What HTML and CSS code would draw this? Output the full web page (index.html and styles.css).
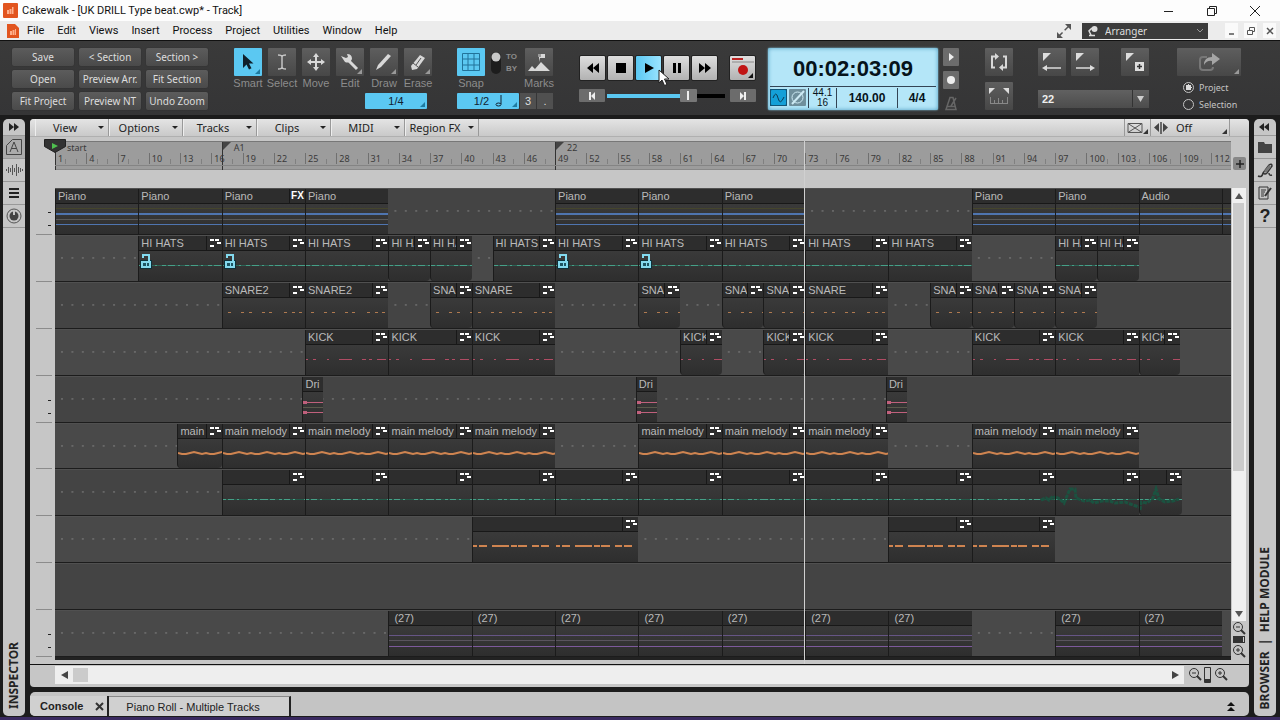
FILE: index.html
```
<!DOCTYPE html>
<html lang="en">
<head>
    <meta charset="UTF-8">
    <meta name="viewport" content="width=device-width, initial-scale=1.0">
    <title>Cakewalk - [UK DRILL Type beat.cwp* - Track]</title>
    <link rel="stylesheet" href="styles.css">
</head>
<body>
    <header class="titlebar">
        <svg class="logo" width="15" height="15"><rect width="15" height="15" rx="1" fill="#e2551f"/><path d="M4 7h2v4h-2zM6.500 6h2v5h-2zM9 4h1.500v7h-1.500z" fill="#ffb08c"/></svg>
        <h1>Cakewalk - [UK DRILL Type beat.cwp* - Track]</h1>
        <div class="winbuttons">
            <button aria-label="Minimize"><svg width="12" height="12"><path d="M1 6.500h9" stroke="#222"/></svg></button>
            <button aria-label="Restore"><svg width="12" height="12"><path d="M1.500 3.500h7v7h-7zM3.500 3v-1.500h7v7h-1.500" fill="none" stroke="#222"/></svg></button>
            <button aria-label="Close"><svg width="12" height="12"><path d="M1 1l10 10M11 1l-10 10" stroke="#222"/></svg></button>
        </div>
    </header>

    <nav class="menubar">
        <svg class="doc" width="12" height="14"><path d="M0 0h8l4 4v10h-12z" fill="#e2551f"/><path d="M3 7h2v4h-2zM5.500 6h2v5h-2zM8 5h1v6h-1z" fill="#ffb08c"/></svg>
        <button>File</button>
        <button>Edit</button>
        <button>Views</button>
        <button>Insert</button>
        <button>Process</button>
        <button>Project</button>
        <button>Utilities</button>
        <button>Window</button>
        <button>Help</button>
        <svg class="expand" width="16" height="16"><path d="M3 13L13 3" stroke="#555" stroke-width="1.500" stroke-dasharray="5 3 8"/><path d="M9 1h6v6zM1 9v6h6z" fill="#555"/></svg>
        <label class="workspace">
            <svg width="12" height="12"><path d="M5 3l-3 3 2 4M2 10.500h6" fill="none" stroke="#ddd" stroke-width="1.500"/><circle cx="7.500" cy="4" r="3" fill="#ddd"/></svg>
            <select aria-label="Workspace"><option>Arranger</option></select>
            <svg width="8" height="6"><path d="M1 1l3 3 3-3" fill="none" stroke="#999"/></svg>
        </label>
        <div class="childbuttons">
            <button aria-label="Minimize view"><svg width="10" height="10"><path d="M2 8h5" stroke="#555" stroke-width="1.500"/></svg></button>
            <button aria-label="Restore view"><svg width="10" height="10"><path d="M1.500 4.500h5v4h-5zM3.500 4v-2.500h5v4h-2" fill="none" stroke="#555"/></svg></button>
            <button aria-label="Close view"><svg width="10" height="10"><path d="M2 2l6 6M8 2l-6 6" stroke="#555" stroke-width="1.500"/></svg></button>
        </div>
    </nav>

    <section class="toolbar">
        <div class="custom">
            <button>Save</button>
            <button>&lt; Section</button>
            <button>Section &gt;</button>
            <button>Open</button>
            <button>Preview Arr.</button>
            <button>Fit Section</button>
            <button>Fit Project</button>
            <button>Preview NT</button>
            <button>Undo Zoom</button>
        </div>

        <div class="tools">
            <div class="toolrow">
                <div class="tool"><button class="icon on corner" id="smart"><svg width="20" height="20"><path d="M5 2v14l3.500-3.500 2.500 5 2.500-1.200-2.500-4.800h4.500z" fill="#10202c"/></svg></button><label for="smart">Smart</label></div>
                <div class="tool"><button class="icon" id="select"><svg width="20" height="20"><path d="M6 3q4 0 4 2q0-2 4-2M10 4v12M6 17q4 0 4-2q0 2 4 2" fill="none" stroke="#c4c4c4" stroke-width="1.500"/></svg></button><label for="select">Select</label></div>
                <div class="tool"><button class="icon" id="move"><svg width="20" height="20"><path d="M10 4v12M4 10h12" stroke="#d8d8d8" stroke-width="2"/><path d="M10 1l3 4h-6zM10 19l3-4h-6zM1 10l4-3v6zM19 10l-4-3v6z" fill="#d8d8d8"/></svg></button><label for="move">Move</label></div>
                <div class="tool"><button class="icon corner" id="edit"><svg width="20" height="20"><path d="M9 9l8 8" stroke="#d8d8d8" stroke-width="3"/><path d="M1 4l5 2 2-1-1-3q5 0 5 5-2 5-7 3z" fill="#d8d8d8"/></svg></button><label for="edit">Edit</label></div>
                <div class="tool"><button class="icon corner" id="draw"><svg width="20" height="20"><path d="M2 18l2-5 10-11 3 2-10 11z" fill="#d8d8d8"/></svg></button><label for="draw">Draw</label></div>
                <div class="tool"><button class="icon corner" id="erase"><svg width="20" height="20"><path d="M3 14l9-11 5 3-8 11-5 1z" fill="#d8d8d8"/><path d="M5 11l5 4M8 13l5-7" stroke="#555"/></svg></button><label for="erase">Erase</label></div>
            </div>
            <button class="res corner">1/4</button>
        </div>

        <div class="snap">
            <div class="toolrow">
                <div class="tool"><button class="icon on" id="snap"><svg width="20" height="20"><path d="M1.500 1.500h17v17h-17zM1.500 7h17M1.500 13h17M7 1.500v17M13 1.500v17" fill="none" stroke="#22739a"/></svg></button><label for="snap">Snap</label></div>
                <div class="toby"><svg width="12" height="24"><rect x="1" y="1" width="10" height="22" rx="5" fill="#1d1d1d"/><circle cx="6" cy="6" r="4.500" fill="#c9c9c9"/></svg><span>TO<br>BY</span></div>
                <div class="tool"><button class="icon" id="marks"><svg width="24" height="20"><path d="M1 19l4-5 3 3 6-7 9 9zM12 10V2h6v4h-5" fill="#d8d8d8"/><path d="M11 2h3v3h-3z" fill="#999"/></svg></button><label for="marks">Marks</label></div>
            </div>
            <div class="snaprow">
                <button class="res corner">1/2 <svg width="7" height="12"><path d="M6 0v9" stroke="#123"/><ellipse cx="3.500" cy="9.500" rx="2.500" ry="1.500" fill="none" stroke="#123"/></svg></button>
                <button>3</button>
                <button>.</button>
            </div>
        </div>

        <div class="transport">
            <div class="keys">
                <button aria-label="Rewind"><svg width="14" height="10"><path d="M7 0v10l-6-5zM13 0v10l-6-5z"/></svg></button>
                <button aria-label="Stop"><svg width="14" height="10"><path d="M2 0h10v10h-10z"/></svg></button>
                <button class="play" aria-label="Play"><svg width="14" height="10"><path d="M3 0l9 5-9 5z"/></svg>
                    <svg class="cursor" width="12" height="18"><path d="M1 1v13l3-3 2.500 5.500 2.500-1-2.500-5.500h4.500z" fill="#fff" stroke="#222"/></svg></button>
                <button aria-label="Pause"><svg width="14" height="10"><path d="M3 0h3v10h-3zM8 0h3v10h-3z"/></svg></button>
                <button aria-label="Fast forward"><svg width="14" height="10"><path d="M1 0v10l6-5zM7 0v10l6-5z"/></svg></button>
                <button class="record corner" aria-label="Record"><svg width="24" height="22"><path d="M1 3h11" stroke="#b22" stroke-width="2"/><path d="M1 6h22" stroke="#888"/><circle cx="12" cy="14" r="5" fill="#c11414"/></svg></button>
            </div>
            <div class="position">
                <button aria-label="Go to start"><svg width="10" height="8"><path d="M2 0h2v8h-2zM8 0v8l-4-4z" fill="#eee"/></svg></button>
                <input type="range" min="0" max="100" value="72" aria-label="Now time">
                <button aria-label="Go to end"><svg width="10" height="8"><path d="M6 0h2v8h-2zM2 0v8l4-4z" fill="#eee"/></svg></button>
            </div>
        </div>

        <div class="lcd">
            <div class="time">00:02:03:09</div>
            <div class="info">
                <svg class="wave" width="17" height="17"><rect width="17" height="17" rx="2" fill="#14a0d8" stroke="#115577" stroke-width="2"/><path d="M3 9q3-8 5 0t6-1" fill="none" stroke="#0c3c55"/></svg>
                <svg class="wave" width="17" height="17"><rect width="17" height="17" rx="1" fill="#6f8f9c"/><circle cx="8.500" cy="8.500" r="5.500" fill="none" stroke="#cdeaf4"/><path d="M3 15L15 2" stroke="#cdeaf4" stroke-width="2"/></svg>
                <span class="rate">44.1<br>16</span>
                <span class="tempo">140.00</span>
                <span class="meter">4/4</span>
            </div>
        </div>

        <div class="side">
            <button aria-label="Play on/off"><svg width="8" height="8"><path d="M2 0l5 4-5 4z" fill="#eee"/></svg></button>
            <button aria-label="Arm"><svg width="8" height="8"><circle cx="4" cy="4" r="4" fill="#eee"/></svg></button>
            <svg width="16" height="17"><path d="M3 15.500h10l-3-12h-3zM8 12l5-8M4 12.500h8" fill="none" stroke="#666" stroke-width="1.500"/></svg>
        </div>

        <div class="loop">
            <button class="icon" aria-label="Loop"><svg width="18" height="18"><path d="M6 3.500h-4v11h3M12 14.500h4v-11h-3" fill="none" stroke="#d8d8d8" stroke-width="2"/><path d="M5 0l4 3.500-4 3.500zM13 11l-4 3.500 4 3.500z" fill="#d8d8d8"/></svg></button>
            <button class="icon" aria-label="Punch"><svg width="20" height="18"><path d="M0 1h6l-6 6zM20 1h-6l6 6z" fill="#ddd"/><path d="M1 16.500h18M1.500 16v-6M5.500 16v-3M9.500 16v-5M13.500 16v-3M18.500 16v-6" fill="none" stroke="#888"/></svg></button>
        </div>

        <div class="markers">
            <div class="markrow">
                <button class="icon" aria-label="Previous marker"><svg width="20" height="20"><path d="M1 1h8l-8 8z" fill="#ddd"/><path d="M3 16h16" stroke="#ddd" stroke-width="1.500"/><path d="M0 16l5-3v6z" fill="#ddd"/></svg></button>
                <button class="icon" aria-label="Next marker"><svg width="20" height="20"><path d="M1 1h8l-8 8z" fill="#ddd"/><path d="M1 16h16" stroke="#ddd" stroke-width="1.500"/><path d="M20 16l-5-3v6z" fill="#ddd"/></svg></button>
                <button class="icon insert" aria-label="Insert marker"><svg width="20" height="20"><path d="M1 1h8l-8 8zM10 10h9v9h-9z" fill="#ddd"/><path d="M14.500 12v5M12 14.500h5" stroke="#333" stroke-width="1.500"/></svg></button>
            </div>
            <label class="section"><select aria-label="Marker"><option>22</option></select><svg width="17" height="17"><path d="M.5 0v17" stroke="#333"/><path d="M5 6h7l-3.500 6z" fill="#ccc"/></svg></label>
        </div>

        <div class="export">
            <button class="icon wide corner" aria-label="Export"><svg width="22" height="20"><path d="M9 5h-4q-3 0-3 3v7q0 3 3 3h7q3 0 3-3" fill="none" stroke="#777" stroke-width="2"/><path d="M6 13q0-8 8-8v-4l8 6-8 6v-4q-5-1-8 4z" fill="#a5a5a5"/></svg></button>
            <label><input type="radio" name="scope" checked>Project</label>
            <label><input type="radio" name="scope">Selection</label>
        </div>
    </section>

    <main>
        <aside class="strip left">
            <button aria-label="Expand inspector"><svg width="12" height="8"><path d="M1 0v8l5-4zM6 0v8l5-4z" fill="#222"/></svg></button>
            <button class="picked" aria-label="Arranger"><svg width="18" height="18"><path d="M1.500 16.500v-9l6-6h9v15z" fill="none" stroke="#444"/><path d="M5 14l4-10 4 10M6.500 10.500h5" fill="none" stroke="#444"/></svg></button>
            <button aria-label="Clip"><svg width="18" height="14"><path d="M1.500 6v2M3.500 4v6M5.500 5v4M7.500 2v10M9.500 5v4M11.500 1v12M13.500 4v6M15.500 5v4M17.500 6v2" stroke="#555"/></svg></button>
            <button aria-label="Track"><svg width="12" height="12"><path d="M1 2h10M1 6h10M1 10h10" stroke="#222" stroke-width="2"/></svg></button>
            <button aria-label="ProChannel"><svg width="16" height="16"><circle cx="8" cy="8" r="7" fill="none" stroke="#555"/><circle cx="8" cy="8" r="4.500" fill="#444"/><path d="M8 2v5" stroke="#c6c6c6" stroke-width="2"/></svg></button>
            <span>INSPECTOR</span>
        </aside>

        <div class="center">
            <section class="panel">
                <div class="viewmenu">
                    <button class="drop">View</button>
                    <button class="drop">Options</button>
                    <button class="drop">Tracks</button>
                    <button class="drop">Clips</button>
                    <button class="drop">MIDI</button>
                    <button class="drop">Region FX</button>
                    <button class="fade corner" aria-label="Crossfade"><svg width="16" height="12"><path d="M1 1.500v9h14v-9zM1 1.500l14 9M15 1.500l-14 9" fill="none" stroke="#555"/></svg></button>
                    <button class="nudge corner"><svg width="14" height="12"><path d="M7 0v12" stroke="#444" stroke-width="1.500"/><path d="M5 1v9l-5-4.500zM9 1v9l5-4.500z" fill="#444"/></svg>Off</button>
                </div>

                <div class="view">
                    <div class="gutter" id="gutter"></div>
                    <div class="timeline" id="timeline">
                        <div class="ruler" id="ruler"></div>
                        <div class="lanes" id="lanes"></div>
                    </div>
                    <div class="vscroll">
                        <button class="plus" aria-label="Add"><svg width="12" height="12"><path d="M6 2v8M2 6h8" stroke="#222" stroke-width="1.500"/></svg></button>
                        <div class="vtrack">
                            <button aria-label="Scroll up"><svg width="8" height="6"><path d="M0 6l4-6 4 6z" fill="#555"/></svg></button>
                            <div class="vthumb"></div>
                            <button aria-label="Scroll down"><svg width="8" height="6"><path d="M0 0l4 6 4-6z" fill="#555"/></svg></button>
                        </div>
                        <svg width="14" height="39"><g fill="none" stroke="#333"><circle cx="6" cy="6" r="4.500"/><path d="M9 9l4 4" stroke-width="2"/><path d="M4 6h4"/><circle cx="6" cy="29" r="4.500"/><path d="M9 32l4 4" stroke-width="2"/><path d="M4 29h4M6 27v4"/></g><path d="M1 15h12v7h-12z" fill="#333"/><path d="M11 16h1v5h-1z" fill="#ccc"/></svg>
                    </div>
                </div>

                <div class="hscroll">
                    <div class="htrack">
                        <button aria-label="Scroll left"><svg width="7" height="8"><path d="M7 0v8l-7-4z" fill="#444"/></svg></button>
                        <div class="hthumb"></div>
                        <button aria-label="Scroll right"><svg width="7" height="8"><path d="M0 0v8l7-4z" fill="#444"/></svg></button>
                    </div>
                    <svg width="42" height="18"><g fill="none" stroke="#333"><circle cx="6" cy="7" r="4.500"/><path d="M9 10l4 4" stroke-width="2"/><path d="M4 7h4"/><circle cx="32" cy="7" r="4.500"/><path d="M35 10l4 4" stroke-width="2"/><path d="M30 7h4M32 5v4"/><path d="M16.500 1.500h6v15h-6z"/></g><path d="M17 13h5v3h-5z" fill="#333"/></svg>
                </div>
            </section>

            <footer class="dock">
                <div class="tab current"><button>Console</button><button aria-label="Close Console"><svg width="9" height="9"><path d="M1 1l7 7M8 1l-7 7" stroke="#333" stroke-width="2"/></svg></button></div>
                <button class="tab">Piano Roll - Multiple Tracks</button>
                <button class="up" aria-label="Expand dock"><svg width="8" height="9"><path d="M0 4l4-4 4 4zM0 9l4-4 4 4z" fill="#111"/></svg></button>
            </footer>
        </div>

        <aside class="strip right">
            <button aria-label="Collapse browser"><svg width="12" height="8"><path d="M5 0v8l-5-4zM10 0v8l-5-4z" fill="#222"/></svg></button>
            <button aria-label="Media"><svg width="14" height="12"><path d="M0 1h6l1 2h7v9h-14z" fill="#444"/></svg></button>
            <button aria-label="Plugins"><svg width="16" height="16"><path d="M1 14q4 2 5-3l6-8q3-2 3 1l-5 7q-2 2-4 0M12 11q0 3 3 2" fill="none" stroke="#333" stroke-width="1.500"/><path d="M7 9l5-6 2 2-5 6z" fill="#777"/></svg></button>
            <button aria-label="Notes"><svg width="14" height="14"><path d="M1 1h9v12h-9z" fill="none" stroke="#333"/><path d="M3 4h5M3 6h4M3 8h3M3 10h3" stroke="#333"/><path d="M13 2l-6 8" stroke="#333" stroke-width="2"/></svg></button>
            <button class="help" aria-label="Help">?</button>
            <span>BROWSER&nbsp; |&nbsp; HELP MODULE</span>
        </aside>
    </main>

    <script src="script.js"></script>
</body>
</html>
```
FILE: styles.css
```
* {
    box-sizing: border-box;
}

body {
    margin: 0;
    height: 100vh;
    display: flex;
    flex-direction: column;
    overflow: hidden;
    background: #1c1c1c;
    border-bottom: 3px solid #3a2a60;
    font-family: "Liberation Sans", Arial, sans-serif;
    font-size: 11px;
}

button, select, input {
    margin: 0;
    padding: 0;
    border: 0;
    background: none;
    font: inherit;
    color: inherit;
}

button {
    display: flex;
    align-items: center;
    justify-content: center;
    white-space: nowrap;
}

svg {
    display: block;
    flex: none;
}

select {
    appearance: none;
}

/* small resize triangle in the lower right of a button */
.corner {
    position: relative;
}

.corner::after {
    content: "";
    position: absolute;
    right: 2px;
    bottom: 2px;
    border-left: 5px solid transparent;
    border-bottom: 5px solid #999;
}

/* title and menus */
.titlebar {
    height: 21px;
    display: flex;
    align-items: center;
    padding-left: 3px;
    background: #fdfdfd;
}

.titlebar h1 {
    margin: 0 0 0 4px;
    font: 11px Roboto, sans-serif;
    color: #111;
}

.winbuttons {
    display: flex;
    gap: 31px;
    margin-left: auto;
    padding-right: 19px;
}

.menubar {
    height: 20px;
    display: flex;
    align-items: center;
    background: #ececec;
    border-bottom: 1px solid #111;
    font: 11px Roboto, sans-serif;
    color: #111;
    padding-left: 7px;
}

.menubar > button {
    margin-right: 13px;
}

.doc {
    margin-right: 8px;
}

.expand {
    margin-left: auto;
    margin-right: 10px;
}

.workspace {
    width: 126px;
    height: 16px;
    display: flex;
    align-items: center;
    gap: 6px;
    padding: 0 4px 0 5px;
    background: #3c3c3c;
    color: #ddd;
    font: 10px "Noto Sans", sans-serif;
}

.workspace select {
    flex: 1;
}

.childbuttons {
    display: flex;
    gap: 6px;
    padding: 0 4px 0 17px;
}

.childbuttons button {
    width: 13px;
    height: 15px;
    background: #fafafa;
}

/* control bar */
.toolbar {
    height: 74px;
    display: flex;
    flex: none;
    padding: 7px 0 0 12px;
    background: linear-gradient(#3a3a3a, #353536);
    color: #ddd;
}

.custom {
    display: grid;
    grid-template-columns: repeat(3, 62px);
    grid-auto-rows: 18px;
    gap: 4px 5px;
    font: 10px "Noto Sans", sans-serif;
}

.custom button {
    background: linear-gradient(#5c5c5c, #4a4a4a);
    border-radius: 2px;
    box-shadow: 0 0 1px #222;
}

.tools {
    margin-left: 26px;
}

.toolrow {
    display: flex;
    gap: 6px;
}

.tool {
    width: 28px;
    display: flex;
    flex-direction: column;
    align-items: center;
    color: #8c8c8c;
}

.tool label {
    line-height: 14px;
}

.icon {
    width: 28px;
    height: 28px;
    background: linear-gradient(#5e5e5e, #474747);
    border-radius: 1px;
}

.on, .res {
    background: #5bc8f2;
    color: #123;
}

.on::after, .res::after {
    border-bottom-color: #1f7ba0;
}

.res {
    width: 62px;
    height: 16px;
    gap: 6px;
    border-radius: 1px;
}

.tools .res {
    margin: 3px 0 0 131px;
}

.snap {
    margin-left: 25px;
}

.snap .toolrow {
    gap: 5px;
}

.toby {
    width: 30px;
    display: flex;
    gap: 4px;
    padding-top: 3px;
    font-size: 8px;
    font-weight: bold;
    line-height: 12px;
    color: #8c8c8c;
}

.snaprow {
    display: flex;
    gap: 1px;
    margin-top: 3px;
}

.snaprow button {
    height: 16px;
    flex: 1;
    background: #505050;
}

.snaprow .res {
    flex: none;
    background: #5bc8f2;
}

.transport {
    margin-left: 26px;
    padding-top: 7px;
}

.keys {
    display: flex;
    gap: 1px;
}

.keys button {
    position: relative;
    width: 27px;
    height: 26px;
    background: linear-gradient(#dedede, #b2b2b2);
    border: 1px solid #222;
    border-radius: 2px;
    color: #111;
}

.keys .play {
    background: linear-gradient(90deg, #5bc8f2, #9be4ff);
}

.keys .record {
    margin-left: 10px;
    align-items: flex-start;
}

.keys .record::after {
    border-bottom-color: #111;
}

.cursor {
    position: absolute;
    left: 22px;
    top: 13px;
    z-index: 2;
}

.position {
    display: flex;
    gap: 2px;
    margin-top: 8px;
}

.position button {
    width: 26px;
    height: 13px;
    background: #6c6c6c;
    border-radius: 1px;
}

.position input {
    appearance: none;
    width: 118px;
    height: 13px;
    margin-right: 3px;
    background: linear-gradient(90deg, #5bc8f2 71%, #000 71%) center / 100% 4px no-repeat;
}

.position input::-webkit-slider-thumb {
    appearance: none;
    width: 17px;
    height: 13px;
    background: linear-gradient(90deg, transparent 7px, #eee 7px, #eee 9px, transparent 9px) center / 17px 9px no-repeat, #777;
    border-radius: 1px;
}

.lcd {
    width: 170px;
    height: 62px;
    margin-left: 12px;
    padding: 2px;
    display: flex;
    flex-direction: column;
    background: #b4e6f8;
    box-shadow: inset 0 0 4px #4d9cc0, 0 0 2px #8cd9f5;
    border-radius: 2px;
    color: #06131a;
    font-weight: bold;
}

.time {
    height: 37px;
    line-height: 37px;
    font-size: 22px;
    text-align: center;
    border-bottom: 1px solid #345;
}

.info {
    display: flex;
    align-items: center;
    height: 21px;
}

.wave {
    margin-right: 2px;
}

.info span {
    height: 20px;
    display: flex;
    align-items: center;
    justify-content: center;
    border-left: 1px solid #345;
}

.info .rate {
    width: 28px;
    font-size: 10px;
    line-height: 10px;
    font-weight: normal;
    text-align: center;
}

.tempo {
    flex: 1;
    font-size: 12px;
}

.meter {
    width: 39px;
    font-size: 12px;
}

.side {
    display: flex;
    flex-direction: column;
    gap: 5px;
    margin-left: 5px;
}

.side button {
    width: 16px;
    height: 18px;
    background: #6c6c6c;
    border-radius: 1px;
}

.loop {
    display: flex;
    flex-direction: column;
    gap: 6px;
    margin-left: 26px;
}

.markers {
    width: 111px;
    margin-left: 25px;
}

.markrow {
    display: flex;
    gap: 5px;
    margin-bottom: 14px;
}

.insert {
    margin-left: auto;
}

.section {
    height: 18px;
    display: flex;
    background: linear-gradient(#616161, #4c4c4c);
    font-weight: bold;
    color: #eee;
}

.section select {
    flex: 1;
    padding-left: 4px;
}

.export {
    margin-left: 28px;
    font: 9px "Noto Sans", sans-serif;
    color: #c4c4c4;
}

.wide {
    width: 64px;
    margin-bottom: 3px;
}

.export label {
    display: flex;
    align-items: center;
    gap: 5px;
    height: 17px;
    padding-left: 6px;
}

.export input {
    appearance: none;
    width: 11px;
    height: 11px;
    border: 1px solid #c4c4c4;
    border-radius: 50%;
}

.export input:checked {
    background: radial-gradient(circle, #ddd 3px, transparent 3px);
}

/* main area */
main {
    flex: 1;
    min-height: 0;
    display: flex;
    gap: 5px;
    padding: 4px 4px 1px 3px;
}

.strip {
    width: 22px;
    display: flex;
    flex-direction: column;
    background: #c6c6c6;
    border-radius: 5px;
    color: #222;
}

.strip button {
    height: 23px;
    flex: none;
    border-bottom: 1px solid #999;
}

.strip button:first-child {
    height: 17px;
}

.strip .picked {
    background: #ababab;
}

.strip .help {
    font-size: 18px;
    font-weight: bold;
}

.strip span {
    margin-top: auto;
    padding-top: 7px;
    writing-mode: vertical-rl;
    transform: rotate(180deg);
    font: bold 12px/22px "Noto Sans", sans-serif;
}

.center {
    flex: 1;
    min-width: 0;
    display: flex;
    flex-direction: column;
    gap: 5px;
}

.panel {
    flex: 1;
    min-height: 0;
    display: flex;
    flex-direction: column;
    background: #c6c6c6;
    border-radius: 4px;
    overflow: hidden;
}

.viewmenu {
    height: 18px;
    flex: none;
    display: flex;
    padding: 0 19px 0 5px;
    background: linear-gradient(#e4e4e4, #c9c9c9);
    border-bottom: 1px solid #b0b0b0;
    font: 11px "Noto Sans", sans-serif;
    color: #222;
}

.drop {
    position: relative;
    width: 74px;
    padding-right: 14px;
    border-left: 1px solid #eee;
    border-right: 1px solid #999;
}

.drop::after {
    content: "";
    position: absolute;
    right: 4px;
    top: 7px;
    border: 3px solid transparent;
    border-top-color: #222;
    border-bottom: 0;
}

.fade {
    width: 27px;
    margin-left: auto;
    border-left: 1px solid #999;
    border-right: 1px solid #999;
    padding-right: 5px;
}

.nudge {
    width: 79px;
    gap: 8px;
    justify-content: flex-start;
    padding-left: 3px;
    border-right: 1px solid #999;
}

.fade::after, .nudge::after {
    border-bottom-color: #333;
}

.view {
    flex: 1;
    min-height: 0;
    display: flex;
}

.gutter {
    width: 25px;
    padding: 51px 3px 7px 6px;
    display: grid;
    grid-auto-rows: 1fr;
}

.gutter div {
    border-bottom: 1px solid #8c8c8c;
}

.gutter svg {
    margin-left: auto;
}

.timeline {
    position: relative;
    flex: 1;
    min-width: 0;
    display: flex;
    flex-direction: column;
    padding-top: 4px;
}

.ruler {
    position: relative;
    height: 29px;
    flex: none;
    margin-bottom: 18px;
    background: #9c9c9c;
    border-top: 1px solid #777;
    border-bottom: 1px solid #888;
    display: grid;
    grid-template-columns: repeat(903, minmax(0, 1fr));
    grid-template-rows: 11px 16px;
    font: 9px "Noto Sans", sans-serif;
    color: #3a3a3a;
}

.ruler > span {
    height: 11px;
    line-height: 11px;
    border-left: 1px solid #707070;
    padding-left: 2px;
    grid-row: 2;
}

.ruler > i {
    grid-row: 2;
    height: 5px;
    margin-top: 6px;
    border-left: 1px solid #808080;
}

.ruler::after {
    content: "";
    grid-column: 1 / -1;
    grid-row: 2;
    height: 12px;
    border-bottom: 1px solid #848484;
}

.ruler > .marker {
    grid-row: 1 / 3;
    height: 28px;
    border-left: 1px solid #333;
    padding: 0;
    display: flex;
    gap: 3px;
}

.home {
    position: absolute;
    left: -11px;
    top: -3px;
}

.lanes {
    flex: 1;
    min-height: 0;
    display: grid;
    grid-template-rows: repeat(10, minmax(0, 1fr));
    border-bottom: 3px solid #222;
    margin-bottom: 4px;
}

.lane {
    display: grid;
    grid-template-columns: repeat(903, minmax(0, 1fr));
    grid-template-rows: 100%;
    background: #444;
    border-bottom: 1px solid #1c1c1c;
    border-top: 1px solid #505050;
    overflow: hidden;
}

.lane:nth-child(even) {
    background: #494949;
}

.dots {
    grid-row: 1;
    width: 100%;
    height: 100%;
}

.clip {
    grid-row: 1;
    min-width: 0;
    display: flex;
    flex-direction: column;
    border-left: 1px solid #1b1b1b;
    background: linear-gradient(#404040, #2e2e2e);
    overflow: hidden;
    color: #bababa;
}

.clip.short {
    border-radius: 0 0 4px 4px;
}

.clip header {
    height: 15px;
    flex: none;
    display: flex;
    background: #2d2d2d;
    border-bottom: 1px solid #181818;
    line-height: 14px;
}

.clip header span {
    flex: 1;
    min-width: 0;
    padding-left: 2px;
    white-space: nowrap;
    overflow: hidden;
}

.clip .wide-name {
    padding-left: 5px;
}

.clip header b {
    width: 16px;
    padding-left: 1px;
    border-left: 1px solid #181818;
    color: #fff;
    font-size: 10px;
}

.clip > svg {
    flex: 1;
    width: 100%;
    min-height: 0;
}

.playhead {
    position: absolute;
    top: 4px;
    bottom: 0;
    width: 1px;
    background: #d0d0d0;
}

.vscroll {
    width: 18px;
    display: flex;
    flex-direction: column;
    align-items: flex-start;
    padding: 20px 0 4px 1px;
}

.plus {
    width: 13px;
    height: 13px;
    margin: 0 0 18px 1px;
    background: #888;
    border-radius: 2px;
}

.vtrack {
    flex: 1;
    width: 14px;
    display: flex;
    flex-direction: column;
    background: #f0f0f0;
}

.vtrack button {
    height: 15px;
}

.vthumb {
    height: 62%;
    margin: 0 2px auto 1px;
    background: #cbcbcb;
}

.hscroll {
    height: 23px;
    flex: none;
    display: flex;
    gap: 4px;
    padding: 1px 19px 3px 25px;
    border-top: 1px solid #111;
}

.htrack {
    flex: 1;
    display: flex;
    background: #eee;
}

.htrack button {
    width: 18px;
}

.hthumb {
    width: 15px;
    margin: 2px auto 2px 0;
    background: #cbcbcb;
}

/* docked tabs */
.dock {
    height: 24px;
    flex: none;
    display: flex;
    padding-top: 4px;
    background: #c4c4c4;
    border-radius: 5px;
    color: #222;
    font-size: 11px;
    overflow: hidden;
}

.tab {
    width: 182px;
    background: #d0d0d0;
    border-top: 1px solid #888;
    border-right: 2px solid #222;
    padding-right: 12px;
}

.current {
    width: 79px;
    display: flex;
    align-items: center;
    justify-content: space-between;
    border-top: 0;
    padding: 0 3px 0 10px;
    font-weight: bold;
}

.up {
    margin: 0 14px 0 auto;
}
```
FILE: script.js
```
const BARS = 112.875;
const BAR_PX = 1176 / BARS;

// line patterns in the clip bodies: y, colour, width and dash lengths
const patterns = {
    audio: [[4, "#45452c", 1], [10, "#4f75b0", 2], [15, "#5a5a5a", 1], [20, "#4f75b0", 1]],
    hats: [[14, "#2c6456", 1], [14, "#46a088", 1, "4 2 7 3 2 5"]],
    snare: [[14, "#b07a50", 1, "0 5 3 10 3 5 3 10 3 4 3 12 3 5 3 4 3 5"]],
    kick: [[14, "#b04c64", 1, "2 5 3 11 2 10 13 10 4 3 3 5 9 4"]],
    drill: [[10, "#c0607c", 1], [10, "#c0607c", 3, "4 60"], [15, "#5a5a4c", 1], [20, "#c0607c", 1], [20, "#c0607c", 3, "4 60"]],
    teal: [[14, "#235a49", 1], [14, "#46a088", 1, "3 2 6 3 2 9 4 2 3 3 8 2 5 4"]],
    orange: [[14, "#cf8450", 2, "4 2 8 5 17 2 6 1 9 5 7 2 8 7"]],
    space: [[9, "#665585", 1], [14, "#5a545e", 1], [20, "#7d5a9c", 1]]
};

// each clip: [start bar, end bar, name, badge]
const lanes = [
    { type: "audio", meter: true, clips: [[1, 9, "Piano"], [9, 17, "Piano"], [17, 25, "Piano", "FX"], [25, 33, "Piano"], [49, 57, "Piano"], [57, 65, "Piano"], [65, 73, "Piano"], [89, 97, "Piano"], [97, 105, "Piano"], [105, 113, "Audio"], [113, 121, ""]] },
    { type: "hats", midi: true, locks: [9, 17, 49, 57], clips: [[9, 17], [17, 25], [25, 33], [33, 37], [37, 41], [43, 49], [49, 57], [57, 65], [65, 73], [73, 81], [81, 89], [97, 101], [101, 105]], name: "HI HATS" },
    { type: "snare", midi: true, name: "SNARE", clips: [[17, 25, "SNARE2"], [25, 33, "SNARE2"], [37, 41], [41, 49], [57, 61], [65, 69], [69, 73], [73, 81], [85, 89], [89, 93], [93, 97], [97, 101]] },
    { type: "kick", midi: true, name: "KICK", clips: [[25, 33], [33, 41], [41, 49], [61, 65], [69, 73], [73, 81], [89, 97], [97, 105], [105, 109]] },
    { type: "drill", meter: true, name: "Dri", clips: [[24.75, 26.75], [56.75, 58.75], [80.75, 82.75]] },
    { type: "melody", midi: true, name: "main melody", clips: [[12.75, 17], [17, 25], [25, 33], [33, 41], [41, 49], [57, 65], [65, 73], [73, 81], [89, 97], [97, 105]] },
    { type: "teal", midi: true, name: "", clips: [[17, 25], [25, 33], [33, 41], [41, 49], [49, 57], [57, 65], [65, 73], [73, 81], [81, 89], [89, 97], [97, 105], [105, 109.125]] },
    { type: "orange", midi: true, name: "", clips: [[41, 57], [81, 89], [89, 97]] },
    { type: "", clips: [] },
    { type: "space", meter: true, name: "(27)", clips: [[33, 41], [41, 49], [49, 57], [57, 65], [65, 73], [73, 81], [81, 89], [97, 105], [105, 113]] }
];

const midiIcon = '<svg width="14" height="14"><path d="M2 4h4M7 4h4M9 7h4M2 10h4" stroke="#fff" stroke-width="2"/></svg>';
const lockIcon = '<path d="M1 9h12v9h-12z" fill="#0e3038"/><path d="M2 10h10v7h-10z" fill="#82d9ee"/><path d="M4 7V4h6v6" fill="none" stroke="#82d9ee" stroke-width="2"/><path d="M4 12h3v3h-3zM8 12h2v3h-2z" fill="#1c5563"/>';
const scribbles = {
    89: "M68 15l5-2 3 2 4-4 3 3",
    97: "M0 12l4 2 4 4 6-14 5 0 1 9 8 3 6-1 4 3 8-2 8 0 5 2 10-1 8 3 6 2",
    105: "M0 25l1-8 6 1 6-5 3-9 3 10 6 3 8-1 6-2"
};

function column(bar) {
    return Math.min(Math.round((bar - 1) * 8) + 1, 904);
}

function drawLines(type) {
    if (type === "melody") {
        let d = "M0 14";
        for (let x = 4; x < 92; x += 4) {
            d += "L" + x + " " + (14 + [0, 1, 1, 0, -1, 0, 1][(x / 4) % 7]);
        }
        return '<path d="' + d + '" fill="none" stroke="#cf8450" stroke-width="2"/>';
    }
    return patterns[type].map(([y, color, width, dash]) =>
        `<path d="M0 ${width % 2 ? y + 0.5 : y}H200" stroke="${color}" stroke-width="${width}"${dash ? ` stroke-dasharray="${dash}"` : ""} shape-rendering="crispEdges"/>`
    ).join("");
}

function drawClip(lane, clip) {
    const [start, end, name = lane.name, badge] = clip;
    let body = drawLines(lane.type);
    if (lane.locks && lane.locks.includes(start)) {
        body += lockIcon;
    }
    if (lane.type === "teal" && scribbles[start]) {
        body += `<path d="${scribbles[start]}" fill="none" stroke="#1b5240" stroke-width="3" stroke-dasharray="4 1"/>`;
    }
    const chip = lane.midi ? "<b>" + midiIcon + "</b>" : badge ? "<b>" + badge + "</b>" : "";
    const css = "clip" + (end - start < 5 && lane.midi ? " short" : "");
    return `<div class="${css}" style="grid-column: ${column(start)} / ${column(end)}">
        <header><span${lane.type === "space" ? ' class="wide-name"' : ""}>${name}</span>${chip}</header>
        <svg>${body}</svg></div>`;
}

function drawLane(lane) {
    let html = "";
    if (lane.clips.length) {
        const last = lane.clips[lane.clips.length - 1][1];
        const width = (Math.min(last, BARS + 1) - 1) * BAR_PX;
        html += `<svg class="dots" style="grid-column: 1 / ${column(last)}" viewBox="0 0 ${width} 46" preserveAspectRatio="none">
            <path d="M6 22.500H${width}" stroke="#858585" stroke-dasharray="2 ${BAR_PX - 2}"/></svg>`;
    }
    return '<div class="lane">' + html + lane.clips.map(c => drawClip(lane, c)).join("") + "</div>";
}

function drawRuler() {
    let html = "";
    for (let bar = 1; bar < 113; bar++) {
        const style = `style="grid-column-start: ${column(bar)}"`;
        if (bar % 3 === 1) {
            html += `<span ${style}>${bar}</span>`;
        } else if (bar % 3 === 0 || bar < 10) {
            html += `<i ${style}></i>`;
        }
    }
    [[1, "start"], [17, "A1"], [49, "22"]].forEach(([bar, text]) => {
        html += `<span class="marker" style="grid-column-start: ${column(bar)}"><svg width="8" height="8"><path d="M0 0h8l-8 8z" fill="#444"/></svg>${text}</span>`;
    });
    html += '<svg class="home" width="22" height="14"><path d="M.5.5h21v7l-10.500 6-10.500-6z" fill="#333" stroke="#222"/><path d="M8 4l6 3-6 3z" fill="#4fc04f"/></svg>';
    return html;
}

document.getElementById("ruler").innerHTML = drawRuler();
document.getElementById("lanes").innerHTML = lanes.map(drawLane).join("");
document.getElementById("gutter").innerHTML = lanes.map(lane =>
    "<div>" + (lane.meter ? '<svg width="4" height="40"><path d="M0 24.500h3M0 37.500h3" stroke="#222"/></svg>' : "") + "</div>"
).join("");

const playhead = document.createElement("div");
playhead.className = "playhead";
playhead.style.left = (71.9 / BARS * 100) + "%";
document.getElementById("timeline").appendChild(playhead);
```
